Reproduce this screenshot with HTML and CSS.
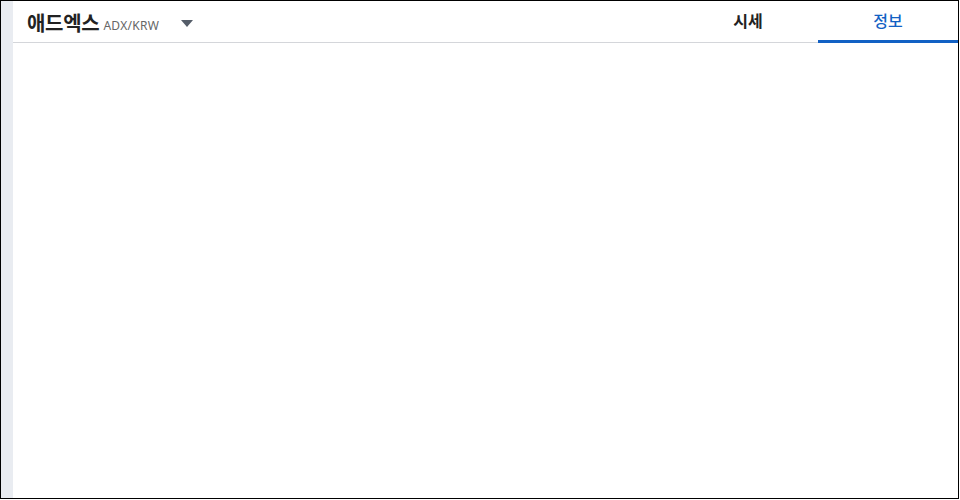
FILE: index.html
```html
<!DOCTYPE html>
<html lang="ko">
<head>
<meta charset="utf-8">
<link rel="stylesheet" href="styles.css">
</head>
<body>
<div class="frame">
  <aside class="rail"></aside>
  <main class="panel">
    <header class="head">
      <div class="coin">
        <span class="coin-name">애드엑스</span>
        <span class="coin-pair">ADX/KRW</span>
        <svg class="caret" width="12" height="7" viewBox="0 0 12 7"><path d="M0 0H12L6 7Z" fill="#555d69"/></svg>
      </div>
      <nav class="tabs">
        <a class="tab">시세</a>
        <a class="tab active">정보</a>
      </nav>
    </header>
    <section class="body"></section>
  </main>
</div>
</body>
</html>
```
FILE: styles.css
```css
* { box-sizing: border-box; }
html, body { margin: 0; padding: 0; background: #fff; }
body { font-family: "Noto Sans CJK KR", "Noto Sans", sans-serif; }
.frame {
  width: 959px;
  height: 499px;
  border: 1px solid #000;
  display: flex;
}
.rail { width: 12px; background: #e9ecf1; flex: none; }
.panel { flex: 1; display: flex; flex-direction: column; }
.head {
  height: 42px;
  border-bottom: 1px solid #d4d6da;
  display: flex;
  justify-content: space-between;
  align-items: stretch;
}
.coin { display: flex; align-items: center; padding-left: 14px; padding-top: 1px; }
.coin-name { font-size: 20px; font-weight: 700; color: #222; letter-spacing: -0.3px; }
.coin-pair { font-size: 12px; color: #666; margin-left: 4px; margin-top: 6px; letter-spacing: 0.3px; font-family: "Noto Sans", "Noto Sans CJK KR", sans-serif; }
.caret { margin-left: 22px; margin-top: 2px; }
.tabs { display: flex; }
.tab {
  width: 140px;
  display: flex;
  align-items: center;
  justify-content: center;
  font-size: 16px;
  font-weight: 700;
  color: #222;
  padding-bottom: 2px;
  border-bottom: 3px solid transparent;
  margin-bottom: -1px;
}
.tab.active { color: #1261c4; font-weight: 500; border-bottom-color: #1261c4; }
.body { flex: 1; }
```
